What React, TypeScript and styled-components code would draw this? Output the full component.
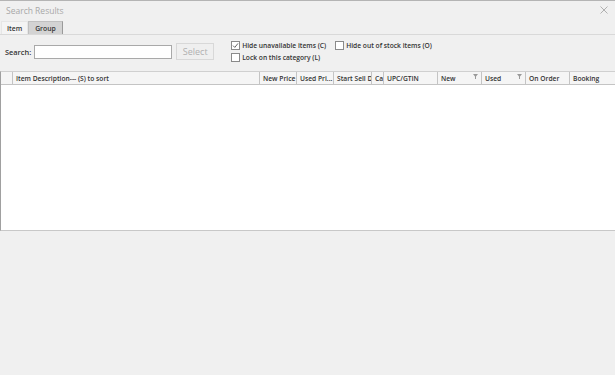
import { ReactElement } from "react";
import styled, { createGlobalStyle } from "styled-components";

const GlobalStyle = createGlobalStyle`
  html, body {
    margin: 0;
    padding: 0;
    background: #f0f0f0;
    font-family: "Open Sans", "Noto Sans", sans-serif;
  }
`;

const Window = styled.div`
  width: 615px;
  height: 375px;
  box-sizing: border-box;
  border-top: 1px solid #b4b4b4;
  background: #f0f0f0;
  display: flex;
  flex-direction: column;
  overflow: hidden;
`;

const TitleBar = styled.div`
  height: 19px;
  display: flex;
  align-items: center;
  justify-content: space-between;
  padding: 0 7px 0 6px;
  color: #a8a8a8;
  font-size: 8.5px;
`;

const CloseIcon = styled.svg`
  width: 8px;
  height: 8px;
  margin-top: -2px;
`;

const TabStrip = styled.div`
  display: flex;
  height: 13px;
  padding-left: 1px;
  border-bottom: 1px solid #d9d9d9;
  margin-top: 1px;
`;

const Tab = styled.div<{ active?: boolean }>`
  font-size: 6.8px;
  font-weight: 600;
  color: #333;
  padding: 0 ${({ active }) => (active ? 5 : 6)}px;
  display: flex;
  align-items: center;
  background: ${({ active }) => (active ? "#f4f4f4" : "#d3d3d3")};
  border: 1px solid ${({ active }) => (active ? "#e6e6e6" : "#c0c0c0")};
  border-bottom: none;
  border-right-color: ${({ active }) => (active ? "#e6e6e6" : "#9a9a9a")};
`;

const Toolbar = styled.div`
  display: flex;
  align-items: flex-start;
  padding: 6px 0 0 5px;
  height: 30px;
  box-sizing: border-box;
`;

const SearchGroup = styled.div`
  display: flex;
  align-items: center;
  margin-top: 2px;
`;

const Label = styled.span`
  font-size: 7.4px;
  font-weight: 600;
  color: #333;
  margin-right: 3px;
`;

const SearchInput = styled.div`
  width: 136px;
  height: 12px;
  background: #fff;
  border: 1px solid #a9a9a9;
`;

const SelectButton = styled.div`
  width: 38px;
  height: 17px;
  margin-left: 4px;
  box-sizing: border-box;
  border: 1px solid #d8d8d8;
  background: #efefef;
  color: #b0b0b0;
  font-size: 9px;
  display: flex;
  align-items: center;
  justify-content: center;
`;

const Options = styled.div`
  display: grid;
  grid-template-columns: 104px auto;
  row-gap: 3px;
  margin-left: 17px;
  margin-top: 0px;
`;

const Option = styled.div`
  display: flex;
  align-items: center;
  font-size: 6.7px;
  font-weight: 600;
  color: #333;
  gap: 2px;
`;

const Box = styled.span`
  width: 7px;
  height: 7px;
  border: 1px solid #8a8a8a;
  background: #fff;
  display: flex;
  align-items: center;
  justify-content: center;
`;

const Grid = styled.div`
  margin-top: 6px;
  height: 160px;
  box-sizing: border-box;
  background: #fff;
  border-left: 1px solid #a0a0a0;
  border-top: 1px solid #d0d0d0;
  border-bottom: 1px solid #c8c8c8;
  display: flex;
  flex-direction: column;
`;

const HeaderRow = styled.div`
  display: flex;
  height: 12px;
  background: #f5f5f5;
  border-bottom: 1px solid #c4c4c4;
`;

const HeaderCell = styled.div<{ w: number }>`
  flex: 0 0 ${({ w }) => w}px;
  box-sizing: border-box;
  border-right: 1px solid #c4c4c4;
  padding-left: 3px;
  font-size: 6.7px;
  font-weight: 600;
  color: #333;
  display: flex;
  align-items: center;
  white-space: nowrap;
  overflow: hidden;
  position: relative;
`;

const FilterMark = styled.svg`
  position: absolute;
  right: 3px;
  top: 2px;
  width: 5px;
  height: 5px;
`;

const columns: { label: string; w: number; filter?: boolean }[] = [
  { label: "", w: 12 },
  { label: "Item Description--- (S) to sort", w: 247 },
  { label: "New Price", w: 37 },
  { label: "Used Pri...", w: 37 },
  { label: "Start Sell D", w: 38 },
  { label: "Ca", w: 12 },
  { label: "UPC/GTIN", w: 54 },
  { label: "New", w: 44, filter: true },
  { label: "Used", w: 44, filter: true },
  { label: "On Order", w: 44 },
  { label: "Booking", w: 60 },
];

const Check = () => (
  <svg width="7" height="7" viewBox="0 0 7 7">
    <path d="M1 3.6 L2.8 5.4 L6 1.4" fill="none" stroke="#555" strokeWidth="0.9" />
  </svg>
);

export default function App(): ReactElement {
  return (
    <Window>
      <GlobalStyle />
      <TitleBar>
        <span>Search Results</span>
        <CloseIcon viewBox="0 0 8 8">
          <path d="M0.5 0.5 L7.5 7.5 M7.5 0.5 L0.5 7.5" stroke="#b0b0b0" strokeWidth="1" />
        </CloseIcon>
      </TitleBar>
      <TabStrip>
        <Tab active>Item</Tab>
        <Tab>Group</Tab>
      </TabStrip>
      <Toolbar>
        <SearchGroup>
          <Label>Search:</Label>
          <SearchInput />
          <SelectButton>Select</SelectButton>
        </SearchGroup>
        <Options>
          <Option>
            <Box>
              <Check />
            </Box>
            Hide unavailable items (C)
          </Option>
          <Option>
            <Box />
            Hide out of stock items (O)
          </Option>
          <Option>
            <Box />
            Lock on this category (L)
          </Option>
        </Options>
      </Toolbar>
      <Grid>
        <HeaderRow>
          {columns.map((c, i) => (
            <HeaderCell key={i} w={c.w}>
              {c.label}
              {c.filter && (
                <FilterMark viewBox="0 0 5 5">
                  <path d="M0 0 H5 L3 2.5 V5 H2 V2.5 Z" fill="#999" />
                </FilterMark>
              )}
            </HeaderCell>
          ))}
        </HeaderRow>
      </Grid>
    </Window>
  );
}
